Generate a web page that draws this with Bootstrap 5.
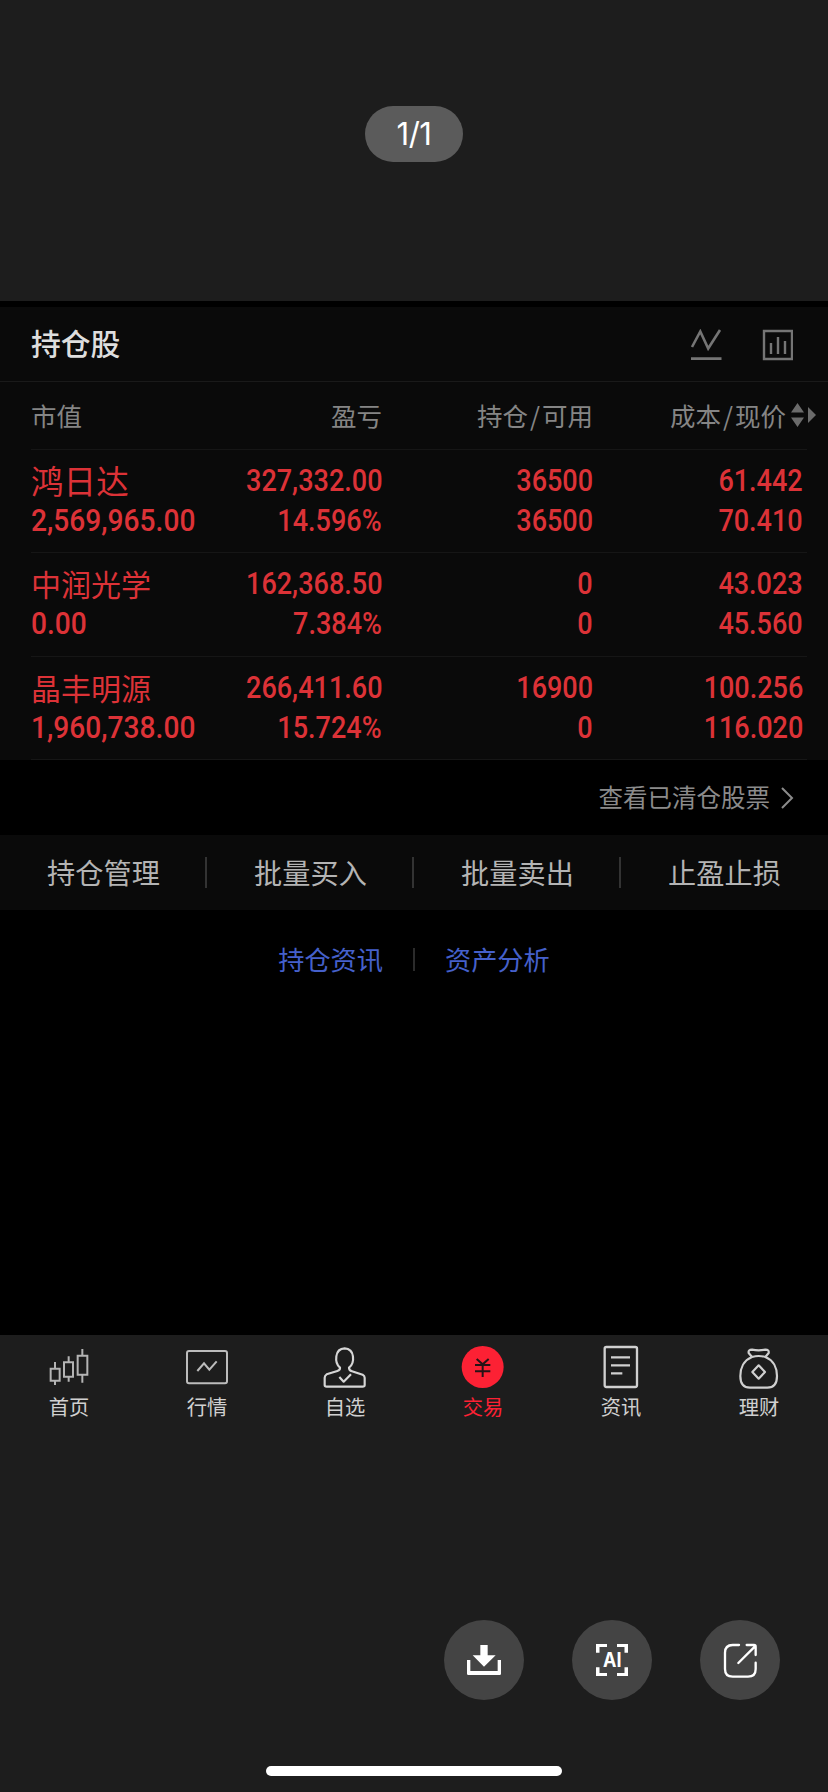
<!DOCTYPE html>
<html lang="zh-CN">
<head>
<meta charset="utf-8">
<meta name="viewport" content="width=device-width, initial-scale=1">
<title>持仓股</title>
<link rel="stylesheet" href="https://cdn.jsdelivr.net/npm/bootstrap@5.3.0/dist/css/bootstrap.min.css">
<style>
  body{background:#1d1d1d;font-family:"Noto Sans CJK SC",sans-serif;line-height:1;width:828px;height:1792px;overflow:hidden}
  svg{display:block;flex:none}
  .viewer-top{height:301px;padding-top:106px}
  .counter{width:98px;height:56px;background:#5b5b5b;color:#fff;font:31px/56px Inter,sans-serif;letter-spacing:-.5px}
  .shot{height:1034px;background:#000;padding-top:6px}
  .panel{background:#0a0a0a;height:453px}
  .panel-head{height:75px;padding:0 35px 0 31px;border-bottom:1px solid #1a1a1a}
  .panel-head h1{font-size:29.8px;font-weight:500;color:#dedede;line-height:1;padding-bottom:3px}
  .panel-icons{gap:40px;color:#757575;padding-top:2px}
  .cells{display:grid;grid-template-columns:171px 180px 211px 210px;margin-left:31px;width:776px;border-bottom:1px solid #161616}
  .cells>div{display:flex;flex-direction:column;align-items:flex-end;white-space:nowrap}
  .cells>div:first-child{align-items:flex-start}
  .cols{height:68px;font-size:25.5px;color:#858585;padding-bottom:2px}
  .cols>div{justify-content:center}
  .cols .slash{padding:0 2px}
  .cols .sortable{flex-direction:row;align-items:center;justify-content:flex-end;margin-right:-13px;gap:5px}
  .stock{height:103.4px;color:#dc3237;padding-top:11px}
  .stock span,.stock b{height:40px;line-height:40px}
  .stock span{margin-top:-1px;height:41px}
  .stock b{font-family:Roboto,sans-serif;font-weight:500;font-size:31px;transform:scaleX(.872);transform-origin:right}
  .stock div:first-child b{transform:scaleX(.908);transform-origin:left}
  .stock span{font-size:30px;font-weight:400}
  .stock .wide{font-size:32.6px}
  .cleared{height:75px;font-size:24.5px;color:#8b8b8b;padding-right:34px;gap:10px}
  .actions{height:75px;background:#0a0a0a;font-size:28.2px;color:#b4b4b4}
  .actions>div{width:207px}
  .actions>div+div::before{content:"";position:absolute;left:-2px;top:22px;width:2px;height:31px;background:#333}
  .info-links{height:98px;font-size:26.2px;gap:30px}
  .info-links a{color:#4560cb;text-decoration:none}
  .info-links i{width:2px;height:23px;background:#2b2b2b}
  .tabs{height:105px;padding-top:7px;color:#d0d0d0;font-size:20.3px}
  .tabs>div{width:138px}
  .tabs span{line-height:30px;margin-top:1px}
  .tabs .on{color:#fc2134}
  .tools{padding:180px 48px 0 0;gap:48px}
  .tools .round{width:80px;height:80px;background:#444}
  .ai{font:700 20px Inter,sans-serif}
  .homebar{width:296px;height:10px;background:#fff;margin-top:66px}
</style>
</head>
<body>
<header class="viewer-top d-flex justify-content-center"><div class="counter rounded-pill text-center">1/1</div></header>

<main class="shot">
  <section class="panel">
    <div class="panel-head d-flex align-items-center justify-content-between">
      <h1 class="m-0">持仓股</h1>
      <div class="panel-icons d-flex">
        <svg width="32" height="32" viewBox="0 0 32 32" fill="none" stroke="currentColor" stroke-width="2.6"><path d="M2 18 10.3 2.5 18.2 19.5 30 1M1 29.6H31.5"/></svg>
        <svg width="31" height="32" viewBox="0 0 31 32" fill="none" stroke="currentColor" stroke-width="2.4"><path d="M2 2H30V30H2ZM9 25V14M16 25V8M23 25V12"/></svg>
      </div>
    </div>
    <div class="cells cols">
      <div>市值</div><div>盈亏</div><div><span>持仓<span class="slash">/</span>可用</span></div>
      <div class="sortable"><span>成本<span class="slash">/</span>现价</span>
        <svg width="25" height="24" viewBox="0 0 25 24" fill="#6b6b6b"><path d="M0 9.5 6.5 0 13 9.5ZM0 14.5 6.5 24 13 14.5ZM17 4 25 12 17 20Z"/></svg>
      </div>
    </div>
    <div class="cells stock">
      <div><span class="wide">鸿日达</span><b>2,569,965.00</b></div>
      <div><b>327,332.00</b><b>14.596%</b></div>
      <div><b>36500</b><b>36500</b></div>
      <div><b>61.442</b><b>70.410</b></div>
    </div>
    <div class="cells stock">
      <div><span>中润光学</span><b>0.00</b></div>
      <div><b>162,368.50</b><b>7.384%</b></div>
      <div><b>0</b><b>0</b></div>
      <div><b>43.023</b><b>45.560</b></div>
    </div>
    <div class="cells stock">
      <div><span>晶丰明源</span><b>1,960,738.00</b></div>
      <div><b>266,411.60</b><b>15.724%</b></div>
      <div><b>16900</b><b>0</b></div>
      <div><b>100.256</b><b>116.020</b></div>
    </div>
  </section>

  <div class="cleared d-flex align-items-center justify-content-end">查看已清仓股票
    <svg width="14" height="22" viewBox="0 0 14 22" fill="none" stroke="currentColor" stroke-width="2"><path d="M2 1 12 11 2 21"/></svg>
  </div>

  <nav class="actions d-flex align-items-center text-center">
    <div>持仓管理</div>
    <div class="position-relative h-100 d-flex align-items-center justify-content-center">批量买入</div>
    <div class="position-relative h-100 d-flex align-items-center justify-content-center">批量卖出</div>
    <div class="position-relative h-100 d-flex align-items-center justify-content-center">止盈止损</div>
  </nav>

  <div class="info-links d-flex align-items-center justify-content-center"><a href="#">持仓资讯</a><i></i><a href="#">资产分析</a></div>
</main>

<nav class="tabs d-flex text-center">
  <div class="d-flex flex-column align-items-center">
    <svg width="48" height="48" viewBox="135 66 144 144" fill="none" stroke="#b4b4b4" stroke-width="6"><path d="M152 146H179V182H152ZM165 126V146M165 182V195M192 127H219V170H192ZM206 109V127M206 170V185M233 107H262V164H233ZM247 87V107M247 164V188"/></svg>
    <span>首页</span>
  </div>
  <div class="d-flex flex-column align-items-center">
    <svg width="48" height="48" viewBox="549 66 144 144" fill="none" stroke="#bcbcbc" stroke-width="6"><rect x="561" y="93" width="120" height="97" rx="6"/><path d="M592 153 612 130 628 149 650 124"/></svg>
    <span>行情</span>
  </div>
  <div class="d-flex flex-column align-items-center">
    <svg width="48" height="48" viewBox="963 66 144 144" fill="none" stroke="#d6d6d6" stroke-width="6.5" stroke-linejoin="round"><path d="M1020 143C1003 129 1003 86 1034 85C1065 86 1065 129 1047 143Q1047 151 1056 154L1088 164Q1094 167 1094 173V195Q1094 200 1088 200H980Q974 200 974 195V173Q974 167 980 163L1012 153Q1021 150 1020 143Z"/><path d="M1018 171 1031 185 1053 163"/></svg>
    <span>自选</span>
  </div>
  <div class="on d-flex flex-column align-items-center">
    <svg width="48" height="48" viewBox="135 66 144 144" fill="none" stroke="#241316" stroke-width="6"><circle cx="206" cy="141" r="63" fill="#fc2134" stroke="none"/><path d="M188 117 206 133 224 117M183 135H229M183 154H229M206 133V171"/></svg>
    <span>交易</span>
  </div>
  <div class="d-flex flex-column align-items-center">
    <svg width="48" height="48" viewBox="549 66 144 144" fill="none" stroke="#d0d0d0" stroke-width="7"><rect x="572" y="81" width="97" height="120" rx="5"/><path d="M591 112H648M591 136H648M591 160H625"/></svg>
    <span>资讯</span>
  </div>
  <div class="d-flex flex-column align-items-center">
    <svg width="48" height="48" viewBox="963 66 144 144" fill="none" stroke="#d0d0d0" stroke-width="6.5" stroke-linejoin="round"><path d="M1014 111 1004 99Q1002 89 1014 89Q1034 93 1054 89Q1066 89 1064 99L1054 111M1014 111Q1034 105 1054 111C1079 121 1089 145 1089 168C1089 193 1077 203 1060 203H1008C991 203 979 193 979 168C979 145 989 121 1014 111Z"/><path d="M1034 136 1053 156 1034 176 1015 156Z"/></svg>
    <span>理财</span>
  </div>
</nav>

<footer>
  <div class="tools d-flex justify-content-end">
    <div class="round rounded-circle"><svg width="80" height="80" viewBox="0 0 240 240" fill="#fff"><path d="M109 75H131V106H155L120 140 86 106H109Z"/><path d="M69 120H79V153H161V120H171V161Q171 165 167 165H73Q69 165 69 161Z"/></svg></div>
    <div class="round rounded-circle"><svg width="80" height="80" viewBox="0 0 80 80"><path d="M24 24H35V27H27.5V32.7H24ZM56 24H45V27H52.5V32.7H56ZM24 56H35V53H27.5V47.3H24ZM56 56H45V53H52.5V47.3H56Z" fill="#fff"/><text class="ai" x="40.2" y="47" text-anchor="middle" textLength="18.5" lengthAdjust="spacingAndGlyphs" fill="#fff">AI</text></svg></div>
    <div class="round rounded-circle"><svg width="80" height="80" viewBox="0 0 240 240" fill="none" stroke="#fff" stroke-width="7" stroke-linecap="round"><path d="M117 75H98Q75 75 75 98V147Q75 170 98 170H144Q167 170 167 147V128M115 129 165 79M140 75H162Q167 75 167 80V105"/></svg></div>
  </div>
  <div class="homebar rounded-pill mx-auto"></div>
</footer>
<script src="https://cdn.jsdelivr.net/npm/bootstrap@5.3.0/dist/js/bootstrap.bundle.min.js"></script>
</body>
</html>
